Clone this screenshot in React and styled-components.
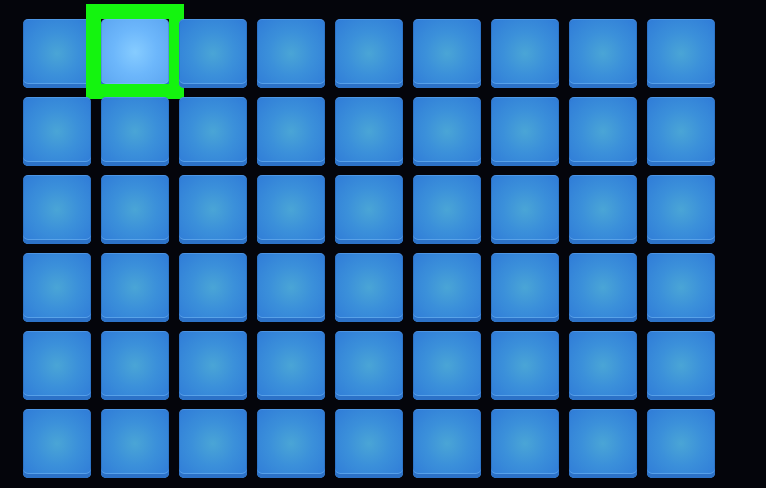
import React from 'react';
import styled, { createGlobalStyle } from 'styled-components';

const GlobalStyle = createGlobalStyle`
  html, body {
    margin: 0;
    padding: 0;
    background: #04050b;
  }
  body {
    width: 766px;
    height: 488px;
    overflow: hidden;
    font-family: "Liberation Sans", Arial, sans-serif;
  }
`;

const Board = styled.div`
  width: 766px;
  height: 488px;
  box-sizing: border-box;
  padding: 19px 0 0 23px;
  background: #04050b;
`;

const PadGrid = styled.div`
  display: grid;
  grid-template-columns: repeat(9, 68px);
  grid-auto-rows: 69px;
  column-gap: 10px;
  row-gap: 9px;
`;

// each pad gets a soft bottom lip, drawn with inset shadows
const Pad = styled.div`
  position: relative;
  border-radius: 5px;
  background: ${({ lit }) => (lit
    ? 'radial-gradient(ellipse at 50% 48%, #86ccff 0%, #6db7fb 45%, #5aa3f0 100%)'
    : 'radial-gradient(ellipse at 50% 50%, #4aa5d6 0%, #3b90da 45%, #2f7bd8 100%)')};
  box-shadow:
    inset 0 1px 0 rgba(140, 200, 255, 0.3),
    inset 0 -4px 0 #2c72c8,
    inset 0 -5px 0 rgba(130, 195, 250, 0.45),
    inset 1px 0 0 rgba(20, 60, 130, 0.2),
    inset -1px 0 0 rgba(20, 60, 130, 0.2);
`;

const Selector = styled.div`
  position: absolute;
  left: -15px;
  top: -15px;
  width: 98px;
  height: 95px;
  box-sizing: border-box;
  border: 15px solid #14f40f;
  pointer-events: none;
`;

const ROWS = 6;
const COLS = 9;
const selected = { row: 0, col: 1 };

export default function App() {
  const pads = [];
  for (let r = 0; r < ROWS; r++) {
    for (let c = 0; c < COLS; c++) {
      const isSel = r === selected.row && c === selected.col;
      pads.push(
        <Pad key={`${r}-${c}`} lit={isSel}>
          {isSel && <Selector />}
        </Pad>
      );
    }
  }

  return (
    <>
      <GlobalStyle />
      <Board>
        <PadGrid>{pads}</PadGrid>
      </Board>
    </>
  );
}
